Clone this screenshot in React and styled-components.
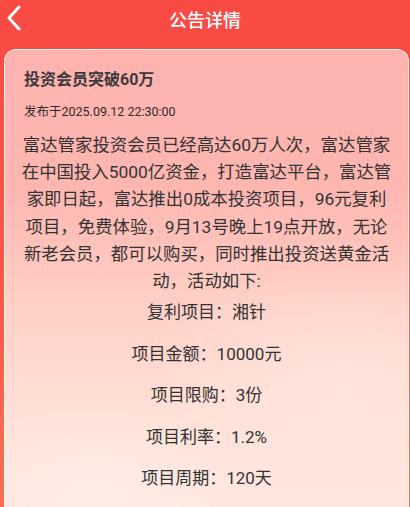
import React from "react"
import styled, { createGlobalStyle } from "styled-components"

const GlobalStyle = createGlobalStyle`
  html, body {
    margin: 0;
    padding: 0;
    height: 100%;
    overflow: hidden;
  }
  body {
    font-family: Roboto, "Noto Sans CJK SC", sans-serif;
    background: #fa4a44;
  }
`

export const Page = styled.div`
  width: 410px;
  height: 507px;
  overflow: hidden;
  background: linear-gradient(180deg, #fa4a44 0%, #fa5448 50%, #fb6d52 100%);
  display: flex;
  flex-direction: column;
`

export const Header = styled.div`
  height: 49px;
  flex-shrink: 0;
  display: flex;
  align-items: center;
  justify-content: center;
  position: relative;
  background: #fa4a44;
  color: #fff;
  font-size: 18px;
  font-weight: 500;
  padding-bottom: 12px;
  box-sizing: border-box;
`

export const Back = styled.div`
  position: absolute;
  left: 6px;
  top: 5px;
  width: 20px;
  height: 26px;
  display: flex;
  align-items: center;
`

export const Card = styled.div`
  flex: 1;
  margin-left: 4px;
  margin-right: 1px;
  border: solid 1px rgba(255, 255, 255, 0.75);
  border-bottom: none;
  border-radius: 12px 12px 0 0;
  padding: 18px 15px 0 15px;
  background:
    radial-gradient(ellipse 160px 90px at 90px 440px, rgba(255, 240, 234, 0.7), rgba(255, 240, 234, 0)),
    radial-gradient(ellipse 200px 120px at 340px 330px, rgba(255, 236, 228, 0.55), rgba(255, 236, 228, 0)),
    linear-gradient(180deg, #feb3b0 0%, #feb6b1 30%, #ffcfc6 55%, #ffe0d7 80%, #ffe7df 100%);
`

export const Title = styled.h1`
  margin: 0 0 0 4px;
  font-size: 16px;
  font-weight: 700;
  color: #3d3a39;
  line-height: 24px;
`

export const Date = styled.div`
  margin: 10px 0 0 4px;
  font-size: 12.5px;
  color: #2e2a29;
  line-height: 20px;
`

export const Body = styled.p`
  margin: 10px 0 0;
  font-size: 17.4px;
  line-height: 27.2px;
  color: #333;
  text-align: center;
`

export const Item = styled.p`
  margin: ${p => p.first ? "4px" : "14.5px"} 0 0;
  font-size: 17px;
  line-height: 27px;
  color: #333;
  text-align: center;
`

const items = [
  "复利项目：湘针",
  "项目金额：10000元",
  "项目限购：3份",
  "项目利率：1.2%",
  "项目周期：120天",
]

export default function App() {
  return (
    <>
      <GlobalStyle />
      <Page>
        <Header>
          <Back>
            <svg width="16" height="26" viewBox="0 0 16 26">
              <path d="M13 2 L3 13 L13 24" fill="none" stroke="#fff" strokeWidth="3" strokeLinecap="round" strokeLinejoin="round" />
            </svg>
          </Back>
          公告详情
        </Header>
        <Card>
          <Title>投资会员突破60万</Title>
          <Date>发布于2025.09.12 22:30:00</Date>
          <Body>
            富达管家投资会员已经高达60万人次，富达管家在中国投入5000亿资金，打造富达平台，富达管家即日起，富达推出0成本投资项目，96元复利项目，免费体验，9月13号晚上19点开放，无论新老会员，都可以购买，同时推出投资送黄金活动，活动如下:
          </Body>
          {items.map((t, i) => (
            <Item key={t} first={i === 0}>{t}</Item>
          ))}
        </Card>
      </Page>
    </>
  )
}
